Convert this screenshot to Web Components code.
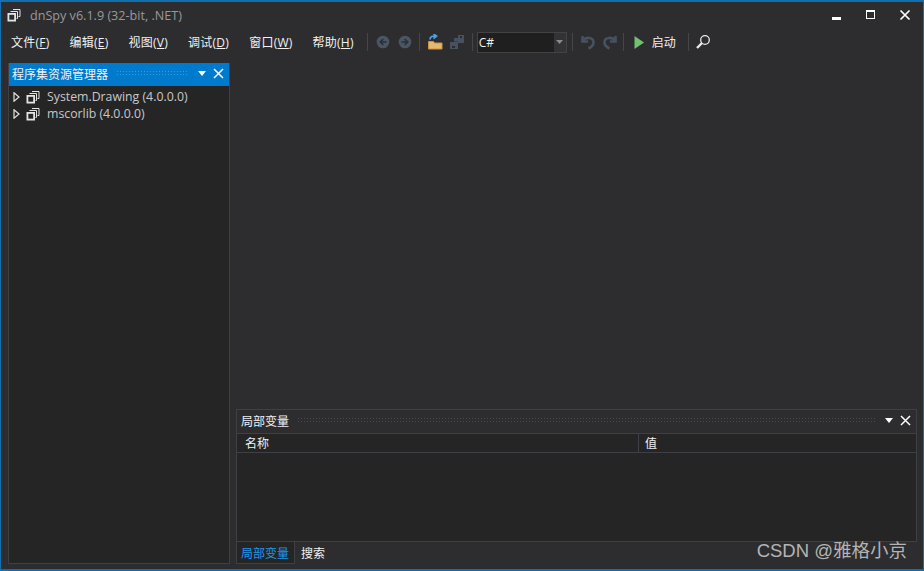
<!DOCTYPE html>
<html><head><meta charset="utf-8"><style>
html,body{margin:0;height:100%;background:#2d2d30;overflow:hidden}
body{font:12px "Open Sans","Noto Sans CJK SC",sans-serif;color:#f1f1f1}
</style></head><body>
<dn-window></dn-window>
<script>
const FONT='"Open Sans","Noto Sans CJK SC",sans-serif';
const asm=`<svg width="14" height="14" viewBox="0 0 14 14" fill="none" stroke="#e4e4e4"><rect x="1.400" y="5.900" width="6.700" height="6.700" stroke-width="1.800"/><path d="M3.500 3.500h7v7H9.500M6 1.500h7v7h-1.500" stroke-width="1"/></svg>`;
function def(name,css,html){customElements.define(name,class extends HTMLElement{constructor(){super();this.attachShadow({mode:'open'}).innerHTML=`<style>${css}</style>${html}`}})}

def('dn-title',`:host{display:flex;align-items:center;height:26px;padding-left:6px;color:#999}
.t{margin-left:9px;font-size:12.600px;flex:1}
.b{width:34px;height:26px;display:flex;align-items:center;justify-content:center}
.last{margin-right:1px}`,
`${asm}<span class="t">dnSpy v6.1.9 (32-bit, .NET)</span>
<span class="b"><svg width="12" height="12" viewBox="0 0 12 12"><rect x="1" y="8" width="9" height="3" fill="#fff"/></svg></span>
<span class="b"><svg width="12" height="12" viewBox="0 0 12 12" fill="none" stroke="#fff"><rect x="1.500" y="1.500" width="8" height="8"/><path d="M1 2h9" stroke-width="2"/></svg></span>
<span class="b last"><svg width="12" height="12" viewBox="0 0 12 12" fill="none" stroke="#fff" stroke-width="1.700"><path d="M1.500 1.500l9 9M10.500 1.500l-9 9"/></svg></span>`);

const menus=[['文件','F'],['编辑','E'],['视图','V'],['调试','D'],['窗口','W'],['帮助','H']];
const sep=(l=3,r=4)=>`<i class="sep" style="margin:0 ${r}px 0 ${l}px"></i>`;
def('dn-toolbar',`:host{display:flex;align-items:center;height:28px;color:#f1f1f1;font-size:12px}
.m{padding:0 8px 1px 10px;margin-right:2px;white-space:nowrap;letter-spacing:.25px}
.m u{text-underline-offset:1px}
.sep{width:1px;height:18px;background:#46464a;flex:none}
.ic{width:22px;height:22px;display:flex;align-items:center;justify-content:center;flex:none}
.combo{display:flex;width:90px;height:21px;border:1px solid #434346;background:#1f1f20;box-sizing:border-box;align-items:center;padding-left:1px;flex:none}
.combo span{flex:1}
.combo b{width:12px;height:19px;background:#333337;display:flex;align-items:center;justify-content:center}
.run{margin-left:2px;color:#f1f1f1}
`,
`${menus.map(([a,k])=>`<span class="m">${a}(<u>${k}</u>)</span>`).join('')}
${sep(3,4)}
<span class="ic"><svg width="14" height="14" viewBox="0 0 14 14"><circle cx="7" cy="7" r="6.300" fill="#4a5663"/><path d="M10.500 7h-6M7.300 4L4.300 7l3 3" fill="none" stroke="#28303a" stroke-width="1.700"/></svg></span>
<span class="ic"><svg width="14" height="14" viewBox="0 0 14 14"><circle cx="7" cy="7" r="6.300" fill="#4a5663"/><path d="M3.500 7h6M6.700 4l3 3-3 3" fill="none" stroke="#28303a" stroke-width="1.700"/></svg></span>
${sep(3,4)}
<span class="ic"><svg width="16" height="16" viewBox="0 0 16 16"><path d="M1.500 7.500h5l1 1.500h7.500v6H1.500z" fill="#e2b873" stroke="#c8923f"/><path d="M3 5.500C3 2.800 5 1.800 8 2M6.500 0L9.500 2 6.500 4.500" fill="none" stroke="#4fa0e8" stroke-width="1.700"/></svg></span>
<span class="ic"><svg width="16" height="16" viewBox="0 0 16 16" fill="#46525f"><path d="M1 8h8v7H1z"/><path d="M5 4h5v3.500H5z"/><path d="M9 1h6v8H9z"/><path d="M3 12h3v2H3zM11 2h2v2h-2z" fill="#2d2d30"/></svg></span>
${sep(4,4)}
<span class="combo"><span>C#</span><b><svg width="7" height="4"><path d="M0 0h7L3.500 4z" fill="#8a8a8a"/></svg></b></span>
${sep(5,4)}
<span class="ic"><svg width="16" height="16" viewBox="0 0 16 16" fill="none" stroke="#46525f" stroke-width="2.600"><path d="M2.500 2v5.500H8"/><path d="M3 6.500C6 2.500 13.500 3 13.500 8.500c0 2.500-2 4.500-5 6"/></svg></span>
<span class="ic"><svg width="16" height="16" viewBox="0 0 16 16" fill="none" stroke="#46525f" stroke-width="2.600"><path d="M13.500 2v5.500H8"/><path d="M13 6.500C10 2.500 2.500 3 2.500 8.500c0 2.500 2 4.500 5 6"/></svg></span>
${sep(2,4)}
<span class="ic"><svg width="12" height="15" viewBox="0 0 12 15"><path d="M1.500 1l9.500 6.500-9.500 6.500z" fill="#71c171"/></svg></span>
<span class="run">启动</span>
${sep(12,3)}
<span class="ic"><svg width="16" height="16" viewBox="0 0 16 16" fill="none" stroke="#e8e8e8"><circle cx="10" cy="6" r="4.300" stroke-width="1.300"/><path d="M7 9l-5 5" stroke-width="2.400"/></svg></span>`);

const closeX=`<svg width="11" height="11" viewBox="0 0 11 11" fill="none" stroke="#fff" stroke-width="1.500"><path d="M1 1l9 9M10 1l-9 9"/></svg>`;
const caret=`<svg width="8" height="5"><path d="M0 0h8L4 5z" fill="#fff"/></svg>`;
def('dn-panel-head',`:host{display:flex;align-items:center;box-sizing:border-box;height:var(--h,23px);padding:0 5px 2px 4px;gap:6px;background:var(--bg,transparent);font-size:12px;color:#f1f1f1;border-bottom:var(--bb,none)}
.dots{flex:1;height:7px;margin-left:2px;background-image:radial-gradient(var(--dot,#4a4a4e) .7px,transparent .8px);background-size:3px 3px}
.end{display:flex;align-items:center;gap:7px;margin-left:4px}`,
`<slot></slot><i class="dots"></i><span class="end">${caret}${closeX}</span>`);

def('dn-tree-item',`:host{display:flex;align-items:center;height:17px;padding-left:4px;font-size:12.300px;color:#c8c8c8}
svg{flex:none}.s{margin-left:6px;display:flex}.t{margin-left:7px;white-space:nowrap}`,
`<svg width="7" height="10" viewBox="0 0 7 10" fill="none" stroke="#e0e0e0" stroke-width="1.200"><path d="M1 .8L6 5 1 9.200z"/></svg><span class="s">${asm}</span><span class="t"><slot></slot></span>`);

def('dn-explorer',`:host{display:flex;flex-direction:column;width:222px;box-sizing:border-box;border:1px solid #3f3f46;border-top:0;background:#252526}
dn-panel-head{--bg:#007acc;--dot:#3a9ad8;padding-left:3px}
.tree{padding-top:2px}`,
`<dn-panel-head>程序集资源管理器</dn-panel-head>
<div class="tree"><dn-tree-item>System.Drawing (4.0.0.0)</dn-tree-item><dn-tree-item>mscorlib (4.0.0.0)</dn-tree-item></div>`);

def('dn-locals',`:host{display:flex;flex-direction:column;height:155px;box-sizing:border-box}
.pane{flex:1;display:flex;flex-direction:column;border:1px solid #3f3f46;background:#252526}
dn-panel-head{--bg:#2d2d30;--h:24px;--bb:1px solid #3f3f46}
.cols{display:grid;grid-template-columns:401px 1fr;height:19px;box-sizing:border-box;align-items:center;border-bottom:1px solid #3f3f46;font-size:12px;color:#f1f1f1}
.cols span{padding:0 0 1px 8px;height:100%;box-sizing:border-box;display:flex;align-items:center}
.cols span+span{border-left:1px solid #3f3f46;padding-left:6px}
.body{flex:1}
.tabs{display:flex;height:22px;font-size:12px;box-sizing:border-box}
.tab{padding:0 5px;display:flex;align-items:center}
.tab+.tab{padding-left:6px}
.on{color:#1c97ea;background:#252526;border:1px solid #3f3f46;border-top:0;padding-left:4px}`,
`<div class="pane"><dn-panel-head>局部变量</dn-panel-head>
<div class="cols"><span>名称</span><span>值</span></div>
<div class="body"></div></div>
<div class="tabs"><span class="tab on">局部变量</span><span class="tab">搜索</span></div>`);

def('dn-window',`:host{display:flex;flex-direction:column;width:924px;height:571px;box-sizing:border-box;border:1px solid #0e70b0;border-bottom-width:2px;border-top-width:2px;background:#2d2d30;position:relative;font-family:${FONT}}
.main{flex:1;min-height:0;display:grid;grid-template-columns:222px 1fr;column-gap:6px;padding:7px 6px 5px 7px}
.right{display:flex;flex-direction:column;justify-content:flex-end}
.wm{position:absolute;right:16px;bottom:7px;font:18.500px "Liberation Sans","Noto Sans CJK SC",sans-serif;color:#b4b4b4}`,
`<dn-title></dn-title><dn-toolbar></dn-toolbar>
<div class="main"><dn-explorer></dn-explorer><div class="right"><dn-locals></dn-locals></div></div>
<span class="wm">CSDN @雅格小京</span>`);
</script></body></html>
